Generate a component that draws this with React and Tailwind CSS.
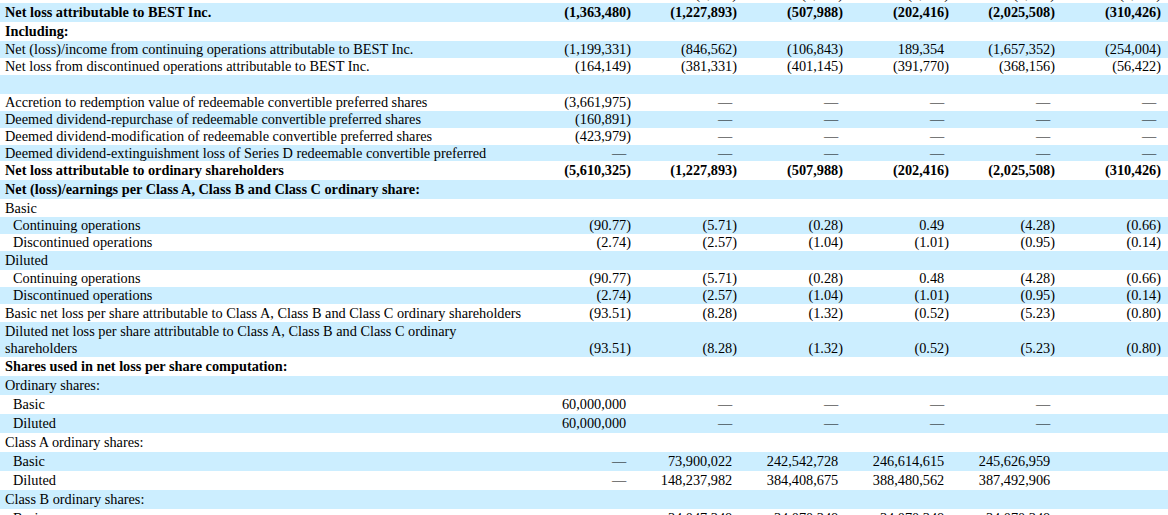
import React from 'react';

const D = '—';

// h: row height class, bg: blue stripe or not
const rows = [
  { h: 'h-[17px]', label: '', values: ['', '(9,371)', '(8,122)', '(9,040)', '(9,288)', '(1,371)'] },
  { h: 'h-[19px]', bg: true, bold: true, label: 'Net loss attributable to BEST Inc.', values: ['(1,363,480)', '(1,227,893)', '(507,988)', '(202,416)', '(2,025,508)', '(310,426)'] },
  { h: 'h-[19px]', bold: true, label: 'Including:' },
  { h: 'h-[17px]', bg: true, label: 'Net (loss)/income from continuing operations attributable to BEST Inc.', values: ['(1,199,331)', '(846,562)', '(106,843)', '189,354', '(1,657,352)', '(254,004)'] },
  { h: 'h-[17px]', label: 'Net loss from discontinued operations attributable to BEST Inc.', values: ['(164,149)', '(381,331)', '(401,145)', '(391,770)', '(368,156)', '(56,422)'] },
  { h: 'h-[19px]', bg: true, label: '' },
  { h: 'h-[17px]', label: 'Accretion to redemption value of redeemable convertible preferred shares', values: ['(3,661,975)', D, D, D, D, D] },
  { h: 'h-[17px]', bg: true, label: 'Deemed dividend-repurchase of redeemable convertible preferred shares', values: ['(160,891)', D, D, D, D, D] },
  { h: 'h-[17px]', label: 'Deemed dividend-modification of redeemable convertible preferred shares', values: ['(423,979)', D, D, D, D, D] },
  { h: 'h-[16px]', bg: true, label: 'Deemed dividend-extinguishment loss of Series D redeemable convertible preferred', values: [D, D, D, D, D, D] },
  { h: 'h-[19px]', bold: true, label: 'Net loss attributable to ordinary shareholders', values: ['(5,610,325)', '(1,227,893)', '(507,988)', '(202,416)', '(2,025,508)', '(310,426)'] },
  { h: 'h-[19px]', bg: true, bold: true, label: 'Net (loss)/earnings per Class A, Class B and Class C ordinary share:' },
  { h: 'h-[18px]', label: 'Basic' },
  { h: 'h-[17px]', bg: true, indent: true, label: 'Continuing operations', values: ['(90.77)', '(5.71)', '(0.28)', '0.49', '(4.28)', '(0.66)'] },
  { h: 'h-[17px]', indent: true, label: 'Discontinued operations', values: ['(2.74)', '(2.57)', '(1.04)', '(1.01)', '(0.95)', '(0.14)'] },
  { h: 'h-[19px]', bg: true, label: 'Diluted' },
  { h: 'h-[17px]', indent: true, label: 'Continuing operations', values: ['(90.77)', '(5.71)', '(0.28)', '0.48', '(4.28)', '(0.66)'] },
  { h: 'h-[17px]', bg: true, indent: true, label: 'Discontinued operations', values: ['(2.74)', '(2.57)', '(1.04)', '(1.01)', '(0.95)', '(0.14)'] },
  { h: 'h-[18px]', label: 'Basic net loss per share attributable to Class A, Class B and Class C ordinary shareholders', values: ['(93.51)', '(8.28)', '(1.32)', '(0.52)', '(5.23)', '(0.80)'] },
  { h: 'h-[35px]', bg: true, label: ['Diluted net loss per share attributable to Class A, Class B and Class C ordinary', 'shareholders'], values: ['(93.51)', '(8.28)', '(1.32)', '(0.52)', '(5.23)', '(0.80)'] },
  { h: 'h-[19px]', bold: true, label: 'Shares used in net loss per share computation:' },
  { h: 'h-[19px]', bg: true, label: 'Ordinary shares:' },
  { h: 'h-[19px]', indent: true, label: 'Basic', values: ['60,000,000', D, D, D, D, ''] },
  { h: 'h-[19px]', bg: true, indent: true, label: 'Diluted', values: ['60,000,000', D, D, D, D, ''] },
  { h: 'h-[19px]', label: 'Class A ordinary shares:' },
  { h: 'h-[19px]', bg: true, indent: true, label: 'Basic', values: [D, '73,900,022', '242,542,728', '246,614,615', '245,626,959', ''] },
  { h: 'h-[19px]', indent: true, label: 'Diluted', values: [D, '148,237,982', '384,408,675', '388,480,562', '387,492,906', ''] },
  { h: 'h-[19px]', bg: true, label: 'Class B ordinary shares:' },
  { h: 'h-[19px]', indent: true, label: 'Basic', values: [D, '34,047,348', '34,070,348', '34,070,348', '34,070,348', ''] },
];

const Cell = ({ value }) => {
  const closes = value.endsWith(')');
  return (
    <div className="w-[106px] shrink-0 text-right pr-[7px] whitespace-nowrap">
      {value}
      {value && !closes && <span className="invisible">)</span>}
    </div>
  );
};

const Row = ({ row }) => {
  const lines = Array.isArray(row.label) ? row.label : [row.label];
  const multi = lines.length > 1;
  return (
    <div
      className={`flex ${multi ? 'items-end' : 'items-center'} ${row.h} ${row.bg ? 'bg-[#cceeff]' : 'bg-white'} ${row.bold ? 'font-bold' : ''}`}
    >
      <div className={`flex-1 min-w-0 whitespace-nowrap ${row.indent ? 'pl-[13px]' : 'pl-[5px]'}`}>
        {lines.map((l, i) => (
          <div key={i}>{l || '\u00a0'}</div>
        ))}
      </div>
      {(row.values || ['', '', '', '', '', '']).map((v, i) => (
        <Cell key={i} value={v} />
      ))}
    </div>
  );
};

export default function App() {
  return (
    <div className="w-[1168px] h-[515px] overflow-hidden bg-white text-black text-[14.3px] leading-[17px] font-['Liberation_Serif','Times_New_Roman',serif]">
      <div className="-mt-[14px]">
        {rows.map((row, i) => (
          <Row key={i} row={row} />
        ))}
      </div>
    </div>
  );
}
